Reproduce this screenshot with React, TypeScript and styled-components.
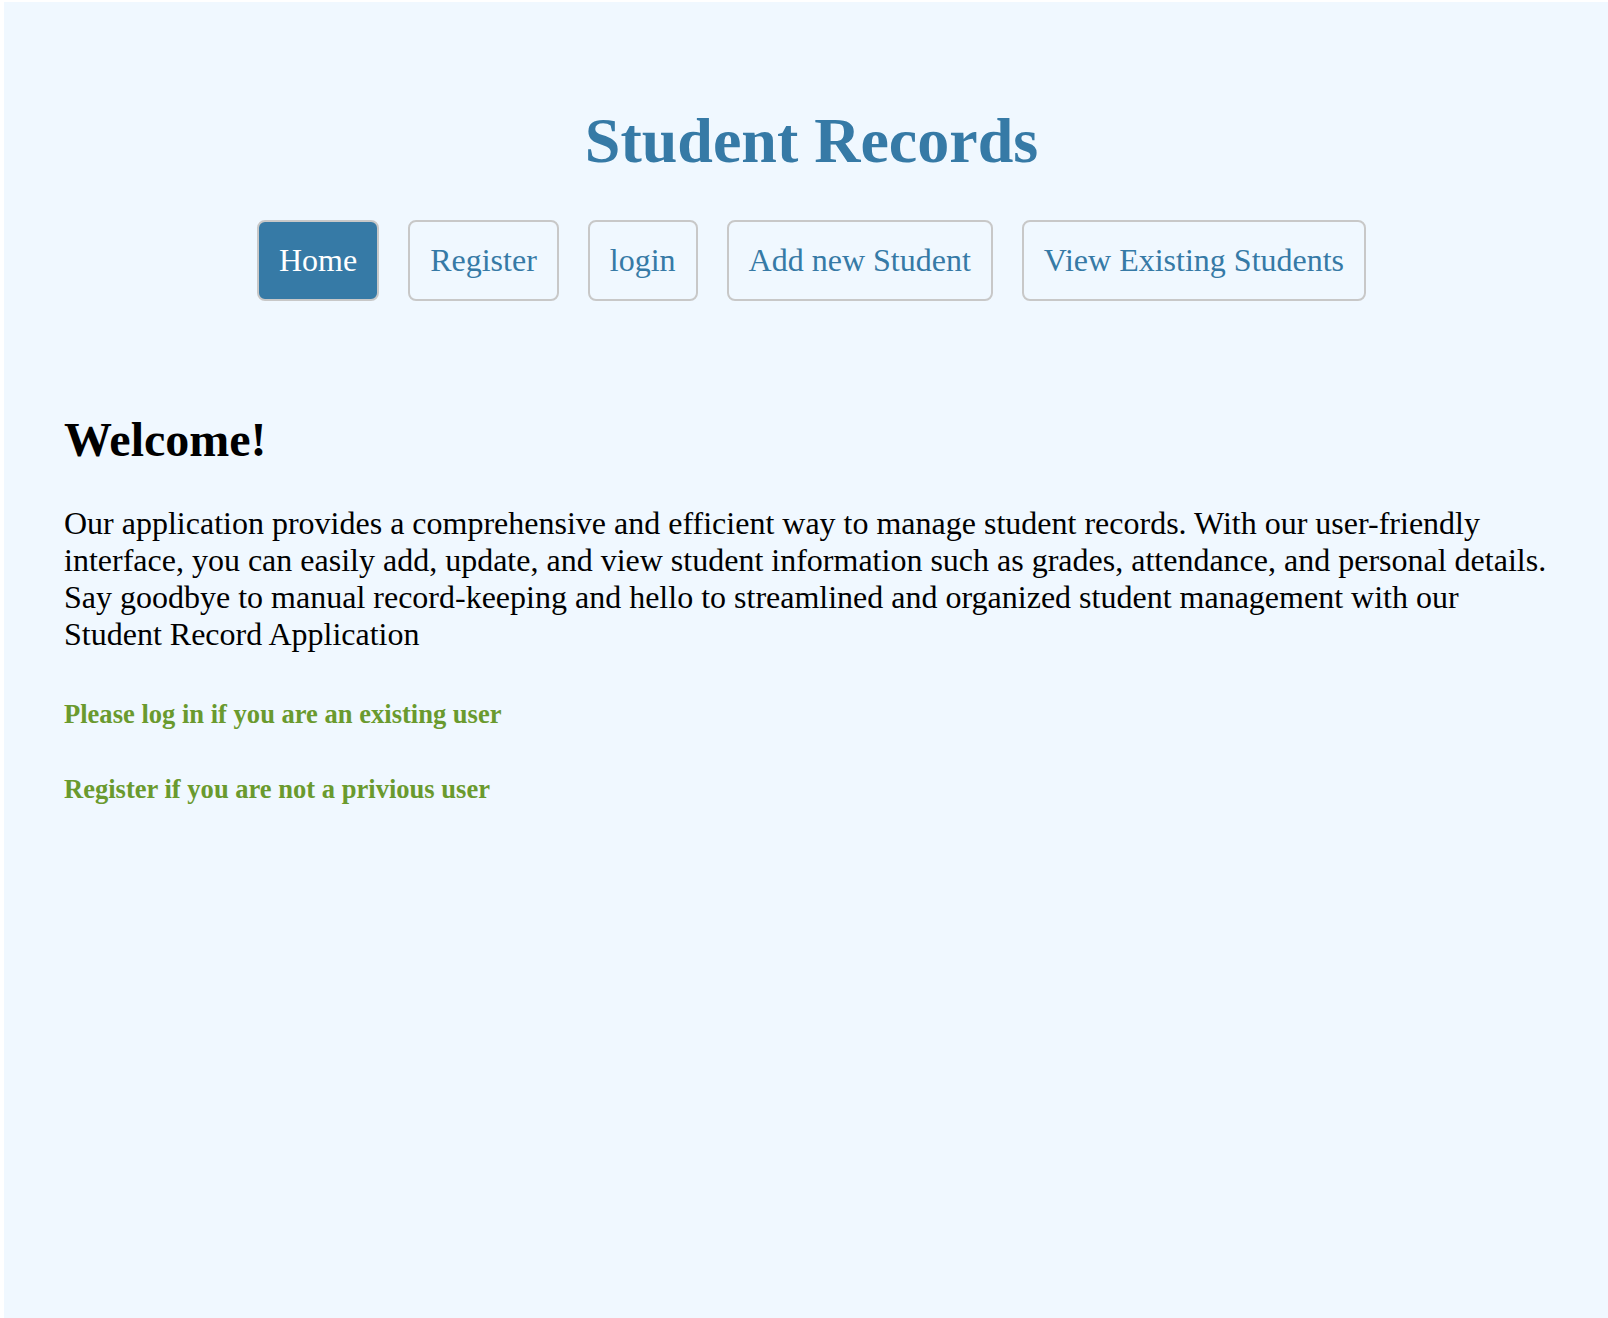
import React from "react";
import styled, { createGlobalStyle } from "styled-components";

const GlobalStyle = createGlobalStyle`
  html, body {
    margin: 0;
    padding: 0;
    background: #ffffff;
  }
  body {
    font-family: "Liberation Serif", "Times New Roman", Times, serif;
  }
`;

const Page = styled.div`
  margin: 2px 0 0 4px;
  min-height: 1316px;
  background: #f0f8ff;
  padding: 0 49px 0 60px;
  box-sizing: border-box;
  font-family: "Liberation Serif", "Times New Roman", Times, serif;
  color: #000;
`;

const Header = styled.header`
  display: flex;
  flex-direction: column;
  align-items: center;
  padding-top: 102px;
`;

const Title = styled.h1`
  margin: 0;
  font-size: 64px;
  font-weight: 700;
  color: #367aa6;
  line-height: normal;
`;

const Nav = styled.nav`
  display: flex;
  gap: 29px;
  margin-top: 42px;
`;

const NavButton = styled.a<{ $active?: boolean }>`
  display: block;
  padding: 20px 20px;
  border: 2px solid #c8c8c8;
  border-radius: 8px;
  font-size: 32px;
  line-height: normal;
  text-decoration: none;
  cursor: pointer;
  background: ${(p) => (p.$active ? "#367aa6" : "transparent")};
  color: ${(p) => (p.$active ? "#ffffff" : "#367aa6")};
`;

const Main = styled.main`
  display: flex;
  flex-direction: column;
  padding-top: 111px;
`;

const Welcome = styled.h2`
  margin: 0;
  font-size: 48px;
  font-weight: 700;
  line-height: normal;
`;

const Intro = styled.p`
  margin: 38px 0 0;
  font-size: 32px;
  line-height: normal;
`;

const Hint = styled.h5<{ $gap: number }>`
  margin: ${(p) => p.$gap}px 0 0;
  font-size: 26.56px;
  font-weight: 700;
  line-height: normal;
  color: #6a9a2e;
`;

const links = [
  { label: "Home", active: true },
  { label: "Register" },
  { label: "login" },
  { label: "Add new Student" },
  { label: "View Existing Students" },
];

export default function App() {
  return (
    <>
      <GlobalStyle />
      <Page>
        <Header>
          <Title>Student Records</Title>
          <Nav>
            {links.map((l) => (
              <NavButton key={l.label} $active={l.active}>
                {l.label}
              </NavButton>
            ))}
          </Nav>
        </Header>
        <Main>
          <Welcome>Welcome!</Welcome>
          <Intro>
            Our application provides a comprehensive and efficient way to manage
            student records. With our user-friendly interface, you can easily
            add, update, and view student information such as grades,
            attendance, and personal details. Say goodbye to manual
            record-keeping and hello to streamlined and organized student
            management with our Student Record Application
          </Intro>
          <Hint $gap={46}>Please log in if you are an existing user</Hint>
          <Hint $gap={44}>Register if you are not a privious user</Hint>
        </Main>
      </Page>
    </>
  );
}
